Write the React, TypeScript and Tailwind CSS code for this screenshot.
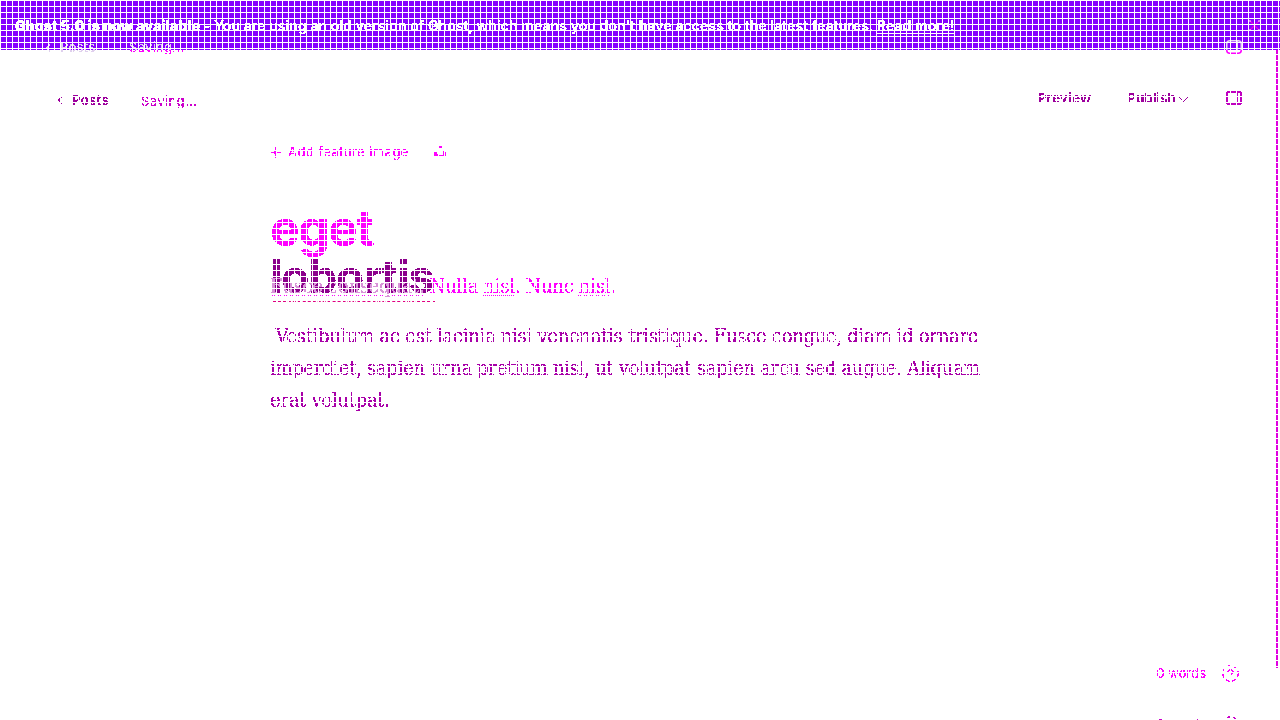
import React from "react";

const sans = "font-['Inter','Noto_Sans',sans-serif]";
const serif = "font-['DejaVu_Serif_Condensed','DejaVu_Serif',serif] [font-stretch:condensed] text-[20px] leading-[32px] tracking-[-0.28px]";

function SidebarIcon({ className, faded }: { className: string; faded?: boolean }) {
  return (
    <svg width="16" height="14" viewBox="0 0 16 14" fill="none" stroke={faded ? "url(#fade)" : "currentColor"} className={className}>
      <linearGradient id="fade" gradientUnits="userSpaceOnUse" x1="0" y1="0" x2="0" y2="14">
        <stop offset="0.7" stopColor="#e8d8f4" />
        <stop offset="0.7" stopColor="#ff00ff" />
      </linearGradient>
      <rect x="0.75" y="0.75" width="14.5" height="12.5" rx="3" strokeWidth="1.5" />
      <path d={faded ? "M11.5 1v8.8" : "M11.5 1v12"} strokeWidth="1" stroke={faded ? "#e8d8f4" : "currentColor"} />
    </svg>
  );
}

function BackIcon() {
  return (
    <svg width="6" height="8" viewBox="0 0 6 8" fill="none" stroke="currentColor" strokeWidth="1.2">
      <path d="M5 .5 1.5 4 5 7.5" />
    </svg>
  );
}

function HelpIcon() {
  return (
    <svg width="17" height="17" viewBox="0 0 17 17" fill="none" stroke="currentColor">
      <circle cx="8.5" cy="8.5" r="7.7" strokeDasharray="4 2.5" />
      <path d="M6 7.2c0-3.2 5-3.2 5-.4 0 1.6-2.5 1.8-2.5 3.5M8.5 12v1" strokeWidth="1.2" />
    </svg>
  );
}

export default function App() {
  return (
    <main className={`relative flex h-[720px] w-[1280px] flex-col overflow-hidden bg-white text-[#c000c0] ${sans}`}>
      <svg width="0" height="0" className="absolute">
        <filter id="crisp" colorInterpolationFilters="sRGB">
          <feComponentTransfer>
            <feFuncA type="discrete" tableValues="0 1 1" />
          </feComponentTransfer>
        </filter>
      </svg>

      <div className="flex h-[50px] shrink-0 items-center bg-[#8500ff] px-[15px] text-[14px] font-semibold tracking-[0.09px] text-white">
        <p className="whitespace-nowrap [filter:url(#crisp)]">
          <b>Ghost 5.0 is now available</b> - You are using an old version of Ghost, which means you don't have access to the latest features. <span className="underline underline-offset-2">Read more!</span>
        </p>
        <svg width="11" height="11" viewBox="0 0 11 11" stroke="#e000e8" strokeWidth="1.3" className="mr-[5px] ml-auto">
          <path d="m.5.5 10 10M10.5.5l-10 10" />
          <path d="m.5.5 1 1M10.5.5l-1 1M.5 10.5l1-1M10.5 10.5l-1-1M5 5h1" stroke="white" />
        </svg>
      </div>

      <header className="flex h-[99px] shrink-0 items-center pr-[38px] pl-[57px] text-[13px] tracking-[0.4px] text-[#9d009d] [filter:url(#crisp)]">
        <BackIcon />
        <span className="ml-[9px] w-[69px] pt-[2px] font-semibold">Posts</span>
        <span className="pt-[4px] text-[#cc00cc]">Saving...</span>
        <div className="ml-auto flex items-center pb-[3px]">
          <span className="mr-[36px] pt-[2px] font-semibold tracking-[0.5px]">Preview</span>
          <span className="pt-[2px] font-semibold tracking-[0.3px]">Publish</span>
          <svg width="9" height="5" viewBox="0 0 9 5" fill="none" stroke="currentColor" className="mt-[2px] mr-[38px] ml-[3px]">
            <path d="m.5.5 4 4 4-4" />
          </svg>
          <SidebarIcon className="text-[#c000c0]" />
        </div>
      </header>

      <section className="flex flex-col pl-[270px] [filter:url(#crisp)]">
        <div className="-mt-[6px] flex h-[20px] items-center text-[13px] tracking-[0.45px] text-[#ff00ff]">
          <svg width="11" height="11" viewBox="0 0 11 11" stroke="currentColor" strokeWidth="1.4" className="mb-[2px]">
            <path d="M5.5 0v11M0 5.5h11" />
          </svg>
          <span className="ml-[7px]">Add feature image</span>
          <svg width="13" height="12" viewBox="0 0 13 12" fill="currentColor" className="mb-[3px] ml-[25px]">
            <path d="M5 0h3v2H5zM0 6h2l2 3h5V5h1v6H0zM11 6h1v5h-1z" />
          </svg>
        </div>
        <h1 className="mt-[41px] leading-[48px] font-bold text-[#8b008b]">
          <span className="block text-[50px] tracking-[-1.6px] text-[#ff00ff]">eget</span>
          <span className="block text-[46px] tracking-[-1.2px]">lobortis</span>
        </h1>
        <p className={`mt-[20px] w-[730px] whitespace-pre text-[#a800a8] ${serif}`}>
          {" Vestibulum ac est lacinia nisi venenatis tristique. Fusce congue, diam id ornare\nimperdiet, sapien urna pretium nisl, ut volutpat sapien arcu sed augue. Aliquam\nerat volutpat."}
        </p>
      </section>

      <div className="absolute top-[39px] left-[45px] flex h-[18px] items-center text-[13px] tracking-[0.3px] text-[#e0d0ee] [filter:url(#crisp)]">
        <BackIcon />
        <span className="ml-[9px] w-[69px]">Posts</span>
        <span className="bg-linear-to-b from-[#e0d0ee] from-60% to-[#ff00ff] to-60% bg-clip-text text-transparent">Saving...</span>
      </div>
      <SidebarIcon faded className="absolute top-[40px] left-[1226px]" />
      <p className={`absolute top-[270px] left-[270px] whitespace-nowrap text-[#ff00ff] [filter:url(#crisp)] ${serif}`}>
        <span className="text-[#d894d8] underline decoration-[#ff00ff] decoration-dotted decoration-1 underline-offset-2">Fusce consequat.</span> Nulla{" "}
        <span className="underline decoration-dotted decoration-1 underline-offset-2">nisl</span>. Nunc{" "}
        <span className="underline decoration-dotted decoration-1 underline-offset-2">nisl</span>.
      </p>
      <div className="absolute top-[301px] left-[273px] w-[162px] border-t border-dashed border-[#e00080]" />

      <footer className="absolute top-[664px] right-[41px] flex items-center text-[13px] text-[#ff00ff] [filter:url(#crisp)]">
        <span className="mr-[16px]">0 words</span>
        <HelpIcon />
      </footer>
      <footer className="absolute top-[715px] right-[41px] flex items-center text-[13px] text-[#cc00cc] [filter:url(#crisp)]">
        <span className="mr-[16px]">0 words</span>
        <HelpIcon />
      </footer>
      <div className="absolute top-[50px] right-[2px] h-[618px] w-[2px] bg-[#e000e0]" />
      <div className="pointer-events-none absolute inset-0 bg-[linear-gradient(to_right,white_1px,transparent_1px),linear-gradient(to_bottom,white_1px,transparent_1px)] bg-[size:6px_6px]" />
    </main>
  );
}
